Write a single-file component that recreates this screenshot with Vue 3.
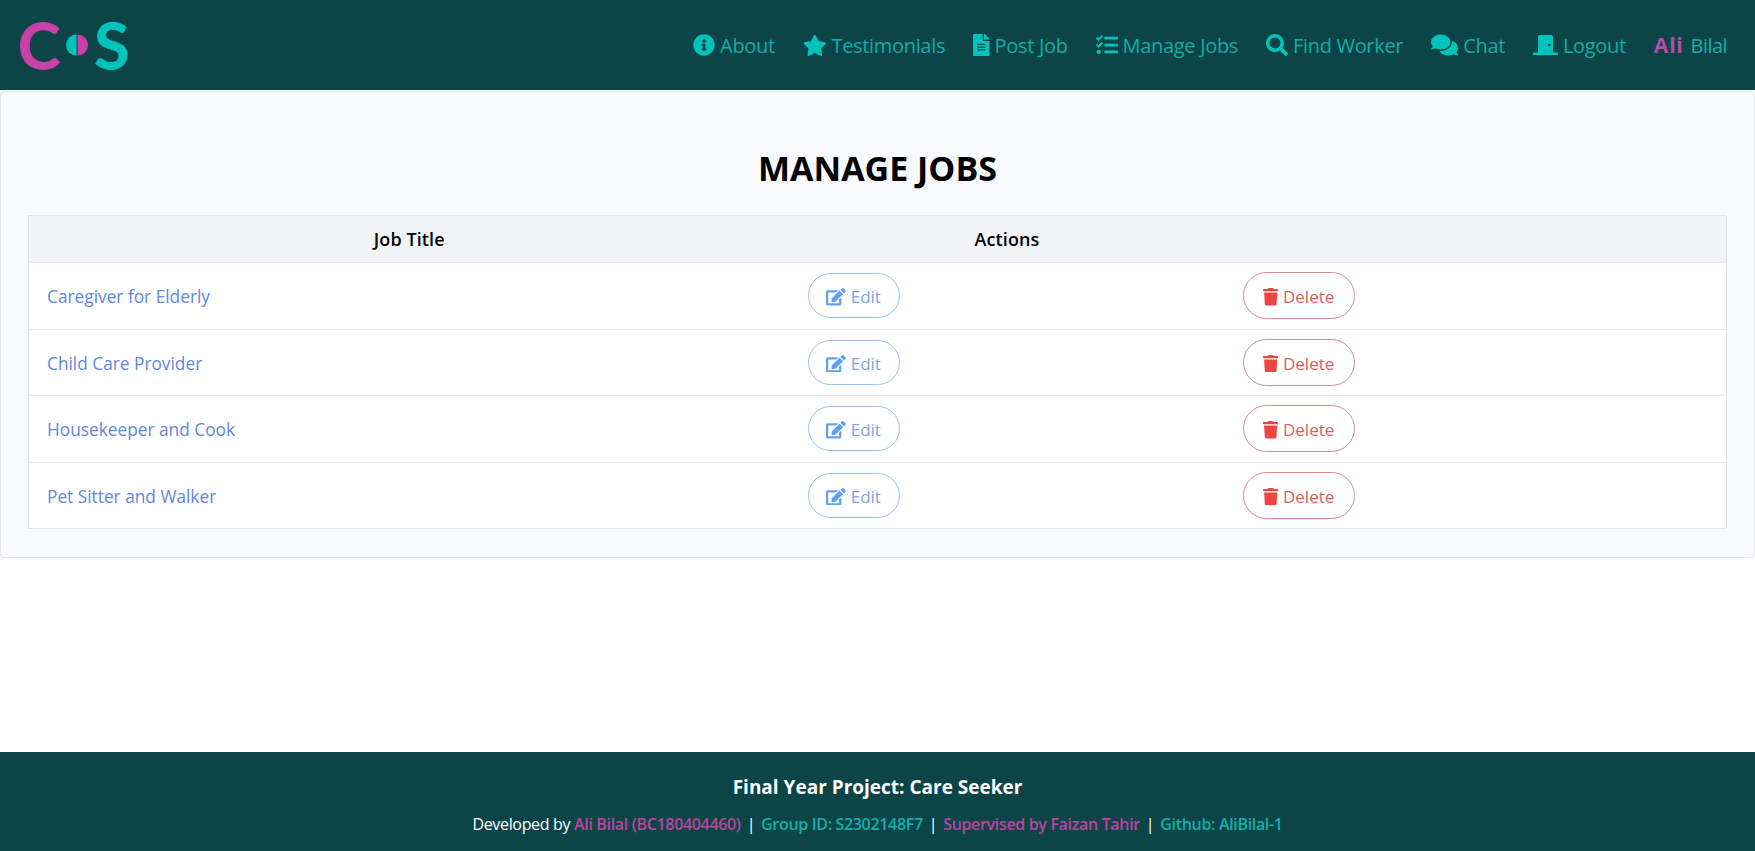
<template>
  <div class="page">
    <header class="topbar">
      <div class="logo">
        <span class="logo-c">C</span>
        <svg class="logo-dot" viewBox="0 0 22 22" width="22" height="22" aria-hidden="true">
          <path d="M10.5 0.5a10.5 10.5 0 0 0 0 21z" fill="#00c4bc" />
          <path d="M11.5 0.5a10.5 10.5 0 0 1 0 21z" fill="#c840a8" />
        </svg>
        <span class="logo-s">S</span>
      </div>
      <nav class="nav">
        <a v-for="item in navItems" :key="item.label" class="nav-item">
          <svg class="nav-icon" :viewBox="`0 0 ${item.w} 512`" :style="{ height: item.h + 'px' }" aria-hidden="true"><path :d="item.d" /></svg>
          <span>{{ item.label }}</span>
        </a>
        <a class="nav-item user"><b>Ali</b> <span>Bilal</span></a>
      </nav>
    </header>

    <main class="content">
      <section class="card">
        <h1>MANAGE JOBS</h1>
        <table class="jobs">
          <colgroup>
            <col class="col-title" />
            <col class="col-edit" />
            <col />
          </colgroup>
          <thead>
            <tr>
              <th>Job Title</th>
              <th>Actions</th>
              <th></th>
            </tr>
          </thead>
          <tbody>
            <tr v-for="job in jobs" :key="job">
              <td><a class="job-link">{{ job }}</a></td>
              <td>
                <button class="btn edit">
                  <svg viewBox="0 0 576 512" aria-hidden="true"><path :d="editIcon" /></svg>
                  Edit
                </button>
              </td>
              <td>
                <button class="btn del">
                  <svg viewBox="0 0 448 512" aria-hidden="true"><path :d="trashIcon" /></svg>
                  Delete
                </button>
              </td>
            </tr>
          </tbody>
        </table>
      </section>
    </main>

    <footer class="footer">
      <h3>Final Year Project: Care Seeker</h3>
      <p>
        Developed by <a class="pink">Ali Bilal (BC180404460)</a>
        <i>|</i>
        <a class="teal">Group ID: S2302148F7</a>
        <i>|</i>
        <a class="pink">Supervised by Faizan Tahir</a>
        <i>|</i>
        <a class="teal">Github: AliBilal-1</a>
      </p>
    </footer>
  </div>
</template>

<script setup>
const navItems = [
  { label: 'About', w: 512, h: 22, d: 'M256 8C119.043 8 8 119.083 8 256c0 136.997 111.043 248 248 248s248-111.003 248-248C504 119.083 392.957 8 256 8zm0 110c23.196 0 42 18.804 42 42s-18.804 42-42 42-42-18.804-42-42 18.804-42 42-42zm56 254c0 6.627-5.373 12-12 12h-88c-6.627 0-12-5.373-12-12v-24c0-6.627 5.373-12 12-12h12v-64h-12c-6.627 0-12-5.373-12-12v-24c0-6.627 5.373-12 12-12h64c6.627 0 12 5.373 12 12v100h12c6.627 0 12 5.373 12 12v24z' },
  { label: 'Testimonials', w: 576, h: 21, d: 'M259.3 17.8L194 150.2 47.9 171.5c-26.2 3.8-36.7 36.1-17.7 54.6l105.7 103-25 145.5c-4.5 26.3 23.2 46 46.4 33.7L288 439.6l130.7 68.7c23.2 12.2 50.9-7.4 46.4-33.7l-25-145.5 105.7-103c19-18.5 8.5-50.8-17.7-54.6L382 150.2 316.7 17.8c-11.7-23.6-45.6-23.9-57.4 0z' },
  { label: 'Post Job', w: 384, h: 22, d: 'M224 136V0H24C10.7 0 0 10.7 0 24v464c0 13.3 10.7 24 24 24h336c13.3 0 24-10.7 24-24V160H248c-13.2 0-24-10.8-24-24zm64 236c0 6.6-5.4 12-12 12H108c-6.6 0-12-5.4-12-12v-8c0-6.6 5.4-12 12-12h168c6.6 0 12 5.4 12 12v8zm0-64c0 6.6-5.4 12-12 12H108c-6.6 0-12-5.4-12-12v-8c0-6.6 5.4-12 12-12h168c6.6 0 12 5.4 12 12v8zm0-72v8c0 6.6-5.4 12-12 12H108c-6.6 0-12-5.4-12-12v-8c0-6.6 5.4-12 12-12h168c6.6 0 12 5.4 12 12zm96-114.1v6.1H256V0h6.1c6.4 0 12.5 2.5 17 7l97.9 98c4.5 4.5 7 10.6 7 16.9z' },
  { label: 'Manage Jobs', w: 512, h: 22, d: 'M139.61 35.5a12 12 0 0 0-17 0L58.93 98.81l-22.7-22.12a12 12 0 0 0-17 0L3.53 92.41a12 12 0 0 0 0 17l47.59 47.4a12.78 12.78 0 0 0 17.61 0l15.59-15.62L156.52 69a12.09 12.09 0 0 0 .09-17zm0 159.19a12 12 0 0 0-17 0l-63.68 63.72-22.7-22.1a12 12 0 0 0-17 0L3.53 252a12 12 0 0 0 0 17L51 316.5a12.77 12.77 0 0 0 17.6 0l15.7-15.69 72.2-72.22a12 12 0 0 0 .09-16.9zM64 368c-26.49 0-48.59 21.5-48.59 48S37.53 464 64 464a48 48 0 0 0 0-96zm432 16H208a16 16 0 0 0-16 16v32a16 16 0 0 0 16 16h288a16 16 0 0 0 16-16v-32a16 16 0 0 0-16-16zm0-320H208a16 16 0 0 0-16 16v32a16 16 0 0 0 16 16h288a16 16 0 0 0 16-16V80a16 16 0 0 0-16-16zm0 160H208a16 16 0 0 0-16 16v32a16 16 0 0 0 16 16h288a16 16 0 0 0 16-16v-32a16 16 0 0 0-16-16z' },
  { label: 'Find Worker', w: 512, h: 22, d: 'M505 442.7L405.3 343c-4.5-4.5-10.6-7-17-7H372c27.6-35.3 44-79.7 44-128C416 93.1 322.9 0 208 0S0 93.1 0 208s93.1 208 208 208c48.3 0 92.7-16.4 128-44v16.3c0 6.4 2.5 12.5 7 17l99.7 99.7c9.4 9.4 24.6 9.4 33.9 0l28.3-28.3c9.4-9.4 9.4-24.6.1-34zM208 336c-70.7 0-128-57.2-128-128 0-70.7 57.2-128 128-128 70.7 0 128 57.2 128 128 0 70.7-57.2 128-128 128z' },
  { label: 'Chat', w: 576, h: 24, d: 'M416 192c0-88.4-93.1-160-208-160S0 103.6 0 192c0 34.3 14.1 65.9 38 92-13.4 30.2-35.5 54.2-35.8 54.5-2.2 2.3-2.8 5.7-1.5 8.7S4.8 352 8 352c36.6 0 66.9-12.3 88.7-25 32.2 15.7 70.3 25 111.3 25 114.9 0 208-71.6 208-160zm122 220c23.9-26 38-57.7 38-92 0-66.9-53.5-124.2-129.3-148.1.9 6.6 1.3 13.3 1.3 20.1 0 105.9-107.7 192-240 192-10.8 0-21.3-.8-31.7-1.9C207.8 439.6 281.8 480 368 480c41 0 79.1-9.2 111.3-25 21.8 12.7 52.1 25 88.7 25 3.2 0 6.1-1.9 7.3-4.8 1.3-2.9.7-6.3-1.5-8.7-.3-.3-22.4-24.2-35.8-54.5z' },
  { label: 'Logout', w: 640, h: 20, d: 'M624 448H512V50.8C512 22.78 490.47 0 464 0H175.99c-26.47 0-48 22.78-48 50.8V448H16c-8.84 0-16 7.16-16 16v32c0 8.84 7.16 16 16 16h608c8.84 0 16-7.16 16-16v-32c0-8.84-7.16-16-16-16zM415.99 288c-17.67 0-32-14.33-32-32s14.33-32 32-32 32 14.33 32 32c0 17.67-14.32 32-32 32z' },
];

const editIcon = 'M402.6 83.2l90.2 90.2c3.8 3.8 3.8 10 0 13.8L274.4 405.6l-92.8 10.3c-12.4 1.4-22.9-9.1-21.5-21.5l10.3-92.8L388.8 83.2c3.8-3.8 10-3.8 13.8 0zm162-22.9l-48.8-48.8c-15.2-15.2-39.9-15.2-55.2 0l-35.4 35.4c-3.8 3.8-3.8 10 0 13.8l90.2 90.2c3.8 3.8 10 3.8 13.8 0l35.4-35.4c15.2-15.3 15.2-40 0-55.2zM384 346.2V448H64V128h229.8c3.2 0 6.2-1.3 8.5-3.5l40-40c7.6-7.6 2.2-20.5-8.5-20.5H48C21.5 64 0 85.5 0 112v352c0 26.5 21.5 48 48 48h352c26.5 0 48-21.5 48-48V306.2c0-10.7-12.9-16-20.5-8.5l-40 40c-2.2 2.3-3.5 5.3-3.5 8.5z';
const trashIcon = 'M432 32H312l-9.4-18.7A24 24 0 0 0 281.1 0H166.8a23.72 23.72 0 0 0-21.4 13.3L136 32H16A16 16 0 0 0 0 48v32a16 16 0 0 0 16 16h416a16 16 0 0 0 16-16V48a16 16 0 0 0-16-16zM53.2 467a48 48 0 0 0 47.9 45h245.8a48 48 0 0 0 47.9-45L416 128H32z';

const jobs = ['Caregiver for Elderly', 'Child Care Provider', 'Housekeeper and Cook', 'Pet Sitter and Walker'];
</script>

<style>
html, body {
  margin: 0;
  background: #fff;
}
</style>

<style scoped>
.page {
  min-height: 851px;
  display: flex;
  flex-direction: column;
  font-family: "Open Sans", "Noto Sans", sans-serif;
}

.topbar {
  height: 90px;
  background: #0b4548;
  display: flex;
  align-items: center;
  justify-content: space-between;
  padding: 0 28px 0 18px;
  flex-shrink: 0;
}

.logo {
  display: flex;
  align-items: center;
  font-family: Lato, sans-serif;
  font-weight: 700;
  font-size: 64px;
  line-height: 1;
  -webkit-text-stroke: 0.8px currentColor;
}

.logo-c {
  color: #c840a8;
}

.logo-s {
  color: #00c4bc;
}

.logo-dot {
  margin: 0 6px 0 6px;
}

.nav {
  display: flex;
  align-items: center;
  gap: 28px;
}

.nav-item {
  display: flex;
  align-items: center;
  gap: 5px;
  font-size: 20px;
  letter-spacing: -0.32px;
  color: #14aca5;
}

.nav-icon {
  fill: #00c4bc;
}

.user {
  gap: 7px;
}

.user b {
  color: #b84ea6;
  font-size: 21px;
  letter-spacing: 0.8px;
}

.user span {
  letter-spacing: -0.55px;
}

.content {
  flex: 1;
  padding-top: 1px;
}

.card {
  background: #f9fafb;
  border: 1px solid #e5e7eb;
  border-radius: 4px;
  padding: 28px 27px;
  box-sizing: border-box;
}

h1 {
  margin: 24px 0 23px;
  font-size: 34px;
  line-height: 48px;
  font-weight: 700;
  text-align: center;
  color: #000;
}

.jobs {
  width: 100%;
  border-collapse: collapse;
  table-layout: fixed;
  background: #fff;
  border: 1px solid #e0e3e8;
}

.col-title {
  width: 761px;
}

.col-edit {
  width: 435px;
}

th {
  height: 46px;
  padding: 0 16px;
  background: #f3f4f6;
  font-size: 18px;
  font-weight: 600;
  letter-spacing: 0.1px;
  color: #000;
  text-align: center;
}

td {
  height: 66.6px;
  padding: 0 18px;
  border-top: 1px solid #e8eaee;
  box-sizing: border-box;
}

.job-link {
  display: inline-block;
  padding-top: 2px;
  font-size: 17.3px;
  color: #5f87dc;
}

.btn {
  display: inline-flex;
  align-items: center;
  justify-content: center;
  gap: 5px;
  padding: 2px 0 0;
  background: #fff;
  border-radius: 24px;
  font-family: inherit;
  font-size: 17px;
  box-sizing: border-box;
  vertical-align: middle;
}

.btn svg {
  height: 17.5px;
}

.edit {
  width: 92px;
  height: 45px;
  color: #7ba6e2;
  border: 1px solid #9cc4e8;
}

.edit svg {
  fill: #60a0f4;
}

.del {
  width: 112px;
  height: 47px;
  color: #d9605f;
  border: 1px solid #d98a8a;
}

.del svg {
  fill: #ef4444;
}

.footer {
  height: 99px;
  background: #0b4548;
  color: #fff;
  text-align: center;
  box-sizing: border-box;
  padding-top: 22px;
  flex-shrink: 0;
}

.footer h3 {
  margin: 0;
  font-size: 19px;
  line-height: 27px;
  font-weight: 700;
}

.footer p {
  margin: 12px 0 0;
  font-size: 16px;
  line-height: 22px;
  letter-spacing: -0.33px;
}

.footer i {
  font-style: normal;
  margin: 0 6px;
}

.pink {
  color: #bb45a0;
  font-weight: 600;
}

.teal {
  color: #12b0a8;
  font-weight: 600;
}
</style>
